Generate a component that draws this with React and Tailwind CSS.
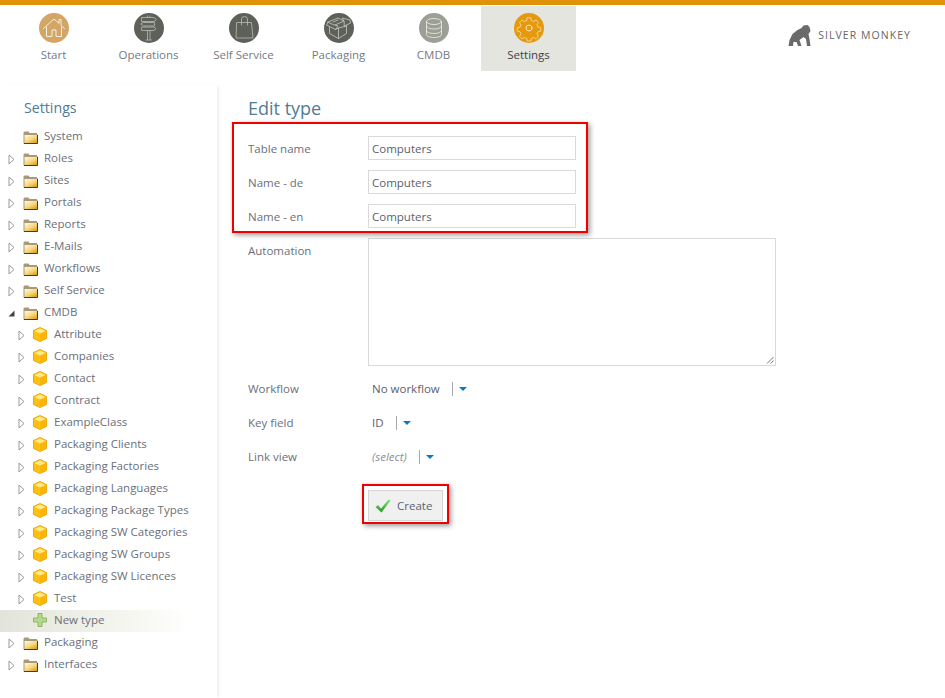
import React from "react";

function Circle({ bg, children }) {
  return (
    <svg width="30" height="30" viewBox="0 0 30 30" fill="none" stroke="#f2efe6" strokeWidth="0.8" strokeLinejoin="round" strokeLinecap="round">
      <circle cx="15" cy="15" r="15" fill={bg} stroke="none" />
      {children}
    </svg>
  );
}

const HomeI = () => (
  <Circle bg="#d4a665">
    <path strokeWidth="1" d="M4.5 15.5 15 6l5 4.500V6.500h2v6l3.500 3M7.500 14v9.500h5.500V17h4v6.500h5.500V14" />
  </Circle>
);
const SignI = () => (
  <Circle bg="#5e605a">
    <path stroke="#b9bab2" d="M8 4.500h12l2.500 2-2.500 2H8zM9.500 9.500h11v3.500h-11l-2.500-1.700zM8 14h12l2 1.700-2 1.800H8zM13.500 17.500V26.500M16 17.500V26.500M12 27h5.500M13.500 3v1.500M16 3v1.500" />
  </Circle>
);
const BagI = () => (
  <Circle bg="#5e605a">
    <path stroke="#b9bab2" d="M8 9.500h14.500L24 25H7.500zM12.500 12V6Q12.500 3.500 15.500 3.500t3 2.500V12" />
  </Circle>
);
const BoxI = () => (
  <Circle bg="#5e605a">
    <path stroke="#c9cac2" d="M4 9 14 5l6 3-9 4zM20 8l-2-3 8 2 .5 3-6 3zM4 9l-1.500 3 9 4.500L14 13l-3-1M5.500 14v6.500l9 5 8-5V13M14.500 25.500V15l-3 1.500M14.500 15l8-2M9 9l5-2" />
  </Circle>
);
const DbI = () => (
  <Circle bg="#9b9f96">
    <ellipse cx="15" cy="8.500" rx="7.500" ry="3" />
    <path d="M7.500 8.500v13c0 1.700 3.400 3 7.500 3s7.500-1.300 7.500-3v-13M7.500 13c0 1.700 3.400 3 7.500 3s7.500-1.300 7.500-3M7.500 17.500c0 1.700 3.400 3 7.500 3s7.500-1.300 7.500-3" />
  </Circle>
);
const GearI = () => (
  <Circle bg="#e5990f">
    <path stroke="#f6e2b4" d="M13 4.500h4l.7 3 2.300 1 2.600-1.600 2.600 2.800-1.600 2.500 1 2.300 3 .6v3.800l-3 .7-1 2.300 1.600 2.600-2.700 2.700-2.500-1.600-2.300 1-.7 3h-3.800l-.7-3-2.300-1-2.600 1.600-2.700-2.700 1.600-2.600-1-2.300-3-.7v-3.800l3-.6 1-2.300-1.600-2.500 2.700-2.800 2.500 1.600 2.300-1z" transform="translate(1 .6) scale(.93)" />
    <circle cx="15" cy="15" r="3" stroke="#f6e2b4" strokeWidth="1" />
  </Circle>
);

const NAV = [
  ["Start", HomeI],
  ["Operations", SignI],
  ["Self Service", BagI],
  ["Packaging", BoxI],
  ["CMDB", DbI],
  ["Settings", GearI, true],
];

function NavItem({ label, Icon, active }) {
  return (
    <div className={`w-[95px] h-[65px] flex flex-col items-center pt-[7px] ${active ? "bg-[#e4e5de] text-[#3d3f4a]" : "text-[#767a85]"}`}>
      <Icon />
      <span className="mt-[4px] text-[11.5px] leading-[16px]">{label}</span>
    </div>
  );
}

const Logo = () => (
  <div className="flex items-center gap-[7px] mr-[34px] mt-[19px] self-start">
    <svg width="23" height="21" viewBox="0 0 22 21" fill="#6a6a6a">
      <path d="M0 21 1 15 4 9 9 5 13 3 15 .5 19 0l2 2 1 4-2 3 1 5 1 7h-3.500l-1-7-2.500-2-2 1.500L11 15l2 6H9.500L8 17H5l-.5 4z" />
    </svg>
    <span className="text-[10.5px] tracking-[1.05px] text-[#666666] leading-none">SILVER MONKEY</span>
  </div>
);

const Folder = () => (
  <svg width="15" height="13" viewBox="0 0 15 13" className="shrink-0">
    <defs>
      <linearGradient id="fg" x1="0.100" y1="0" x2="0.900" y2="1">
        <stop offset="0" stopColor="#fff8e0" />
        <stop offset="0.550" stopColor="#f6d67c" />
        <stop offset="1" stopColor="#dd9c18" />
      </linearGradient>
    </defs>
    <path d="M.5 12.500V1.500L1.500.5h4l1 1.500h7l1 1v9.500z" fill="#a89a78" />
    <path d="M1.500 12V4h12.500v8z" fill="url(#fg)" />
    <path d="M1 12.500h13.500V4" fill="none" stroke="#4a3c18" strokeWidth="1" />
  </svg>
);

const Cube = () => (
  <svg width="14" height="15" viewBox="0 0 14 15" className="shrink-0 -mt-[2px]">
    <path d="M7 .5 13.500 3.500v8L7 14.500.5 11.500v-8z" fill="#fdc111" stroke="#eaa90c" strokeWidth="1" />
    <path d="M7 1.500 12.500 4 7 6.500 1.500 4z" fill="#ffe98a" />
    <path d="M7 7v7l5.500-2.800V4.500z" fill="#fbb40a" />
  </svg>
);

const PlusI = () => (
  <svg width="14" height="14" viewBox="0 0 14 14" className="shrink-0 -mt-[2px]">
    <path d="M5 .5h4V5h4.500v4H9v4.500H5V9H.5V5H5z" fill="#b5d98a" stroke="#8db665" strokeWidth="1" />
  </svg>
);

const Closed = () => (
  <svg width="7" height="11" viewBox="0 0 7 11" className="shrink-0"><path d="M1 1 6 5.500 1 10z" fill="#fff" stroke="#9a9a9a" /></svg>
);
const Open = () => (
  <svg width="7" height="7" viewBox="0 0 7 7" className="shrink-0"><path d="M6.500.5v6h-6z" fill="#444" /></svg>
);

function Row({ depth = 0, arrow, icon, label, selected }) {
  const I = icon;
  return (
    <div className={`h-[22px] flex items-center text-[11.5px] ${selected ? "bg-gradient-to-r from-[#e2e3da] via-[#f0f1e8] to-white w-[190px]" : "w-full"} ${depth ? "pl-[18px]" : "pl-[8px]"}`}>
      <span className="w-[15px] flex items-center shrink-0">
        {arrow === "closed" && <Closed />}
        {arrow === "open" && <Open />}
      </span>
      <I />
      <span className={`${depth ? "ml-[7px]" : "ml-[6px]"} pb-[2px] text-[#6b6f7a]`}>{label}</span>
    </div>
  );
}

const TOP = ["Roles", "Sites", "Portals", "Reports", "E-Mails", "Workflows", "Self Service"];
const CMDB = ["Attribute", "Companies", "Contact", "Contract", "ExampleClass", "Packaging Clients", "Packaging Factories", "Packaging Languages", "Packaging Package Types", "Packaging SW Categories", "Packaging SW Groups", "Packaging SW Licences", "Test"];

function Sidebar() {
  return (
    <aside className="w-[217px] shrink-0 mt-[14px] shadow-[3px_0_3px_-1px_rgba(0,0,0,0.07)]">
      <h2 className="ml-[24px] mt-[13px] mb-[8px] text-[14.2px] leading-[20px] font-normal text-[#4f7c96]">Settings</h2>
      <Row icon={Folder} label="System" />
      {TOP.map((l) => <Row key={l} arrow="closed" icon={Folder} label={l} />)}
      <Row arrow="open" icon={Folder} label="CMDB" />
      {CMDB.map((l) => <Row key={l} depth={1} arrow="closed" icon={Cube} label={l} />)}
      <Row depth={1} icon={PlusI} label="New type" selected />
      <Row arrow="closed" icon={Folder} label="Packaging" />
      <Row arrow="closed" icon={Folder} label="Interfaces" />
    </aside>
  );
}

function Field({ label, value }) {
  return (
    <div className="flex items-center h-[24px] mb-[10px]">
      <label className="w-[120px] pt-[2px] text-[11.5px] text-[#6b6f7a]">{label}</label>
      <div className="w-[208px] h-[24px] border border-[#d9d9d9] px-[3px] text-[11.5px] leading-[24px] text-[#5c6070]">{value}</div>
    </div>
  );
}

function Drop({ label, value, italic }) {
  return (
    <div className="flex items-center h-[24px] mb-[10px] text-[11.5px]">
      <label className="w-[124px] text-[#6b6f7a]">{label}</label>
      <span className={italic ? "italic text-[#8c8f98]" : "text-[#5c6070]"}>{value}</span>
      <span className="ml-[12px] w-px h-[14px] bg-[#a9a9a9]" />
      <svg width="8" height="4" viewBox="0 0 8 4" className="ml-[6px]"><path d="M0 0h8L4 4z" fill="#0a78c8" /></svg>
    </div>
  );
}

function Main() {
  return (
    <main className="relative flex-1 pl-[31px]">
      <h1 className="mt-[25px] mb-[16px] text-[18px] leading-[24px] font-normal text-[#4f7c96]">Edit type</h1>
      <Field label="Table name" value="Computers" />
      <Field label="Name - de" value="Computers" />
      <Field label="Name - en" value="Computers" />
      <div className="flex mb-[11px]">
        <label className="w-[120px] text-[11.5px] leading-[24px] pt-[1px] text-[#6b6f7a]">Automation</label>
        <div className="relative w-[408px] h-[128px] border border-[#d9d9d9]">
          <svg width="8" height="8" viewBox="0 0 8 8" className="absolute right-[1px] bottom-[1px]"><path d="M7.500 1 1 7.500M7.500 4.500 4.500 7.500" stroke="#777" strokeWidth="1" /></svg>
        </div>
      </div>
      <Drop label="Workflow" value="No workflow" />
      <Drop label="Key field" value="ID" />
      <Drop label="Link view" value="(select)" italic />
      <div className="ml-[120px] mt-[21px] w-[75px] h-[31px] flex items-center bg-[#f0f0f0] border border-[#d5d5d5] text-[11.5px] text-[#5c6070]">
        <svg width="16" height="14" viewBox="0 0 16 14" className="ml-[6px]">
          <defs>
            <linearGradient id="ck" x1="0" y1="0" x2="0" y2="1">
              <stop offset="0" stopColor="#8fe07a" />
              <stop offset="1" stopColor="#1f9a25" />
            </linearGradient>
          </defs>
          <path d="M.5 8 3 6l3 3.500L13.500 .5 15.500 1.500 6.500 13.500z" fill="url(#ck)" />
        </svg>
        <span className="ml-[6px]">Create</span>
      </div>
      <div className="absolute left-[15px] top-[51px] w-[356px] h-[111px] border-2 border-[#f00000] shadow-[2px_2px_5px_rgba(0,0,0,0.4)]" />
      <div className="absolute left-[145px] top-[413px] w-[87px] h-[40px] border-2 border-[#f00000] shadow-[2px_2px_5px_rgba(0,0,0,0.4)]" />
    </main>
  );
}

export default function App() {
  return (
    <div className="w-[945px] h-[698px] overflow-hidden bg-white font-['Open_Sans',sans-serif] flex flex-col">
      <div className="h-[5px] bg-[#e09308] shrink-0" />
      <header className="h-[66px] shrink-0 flex pl-[6px] pt-[1px] justify-between">
        <nav className="flex">
          {NAV.map(([l, I, a]) => <NavItem key={l} label={l} Icon={I} active={a} />)}
        </nav>
        <Logo />
      </header>
      <div className="flex flex-1 min-h-0">
        <Sidebar />
        <Main />
      </div>
    </div>
  );
}
